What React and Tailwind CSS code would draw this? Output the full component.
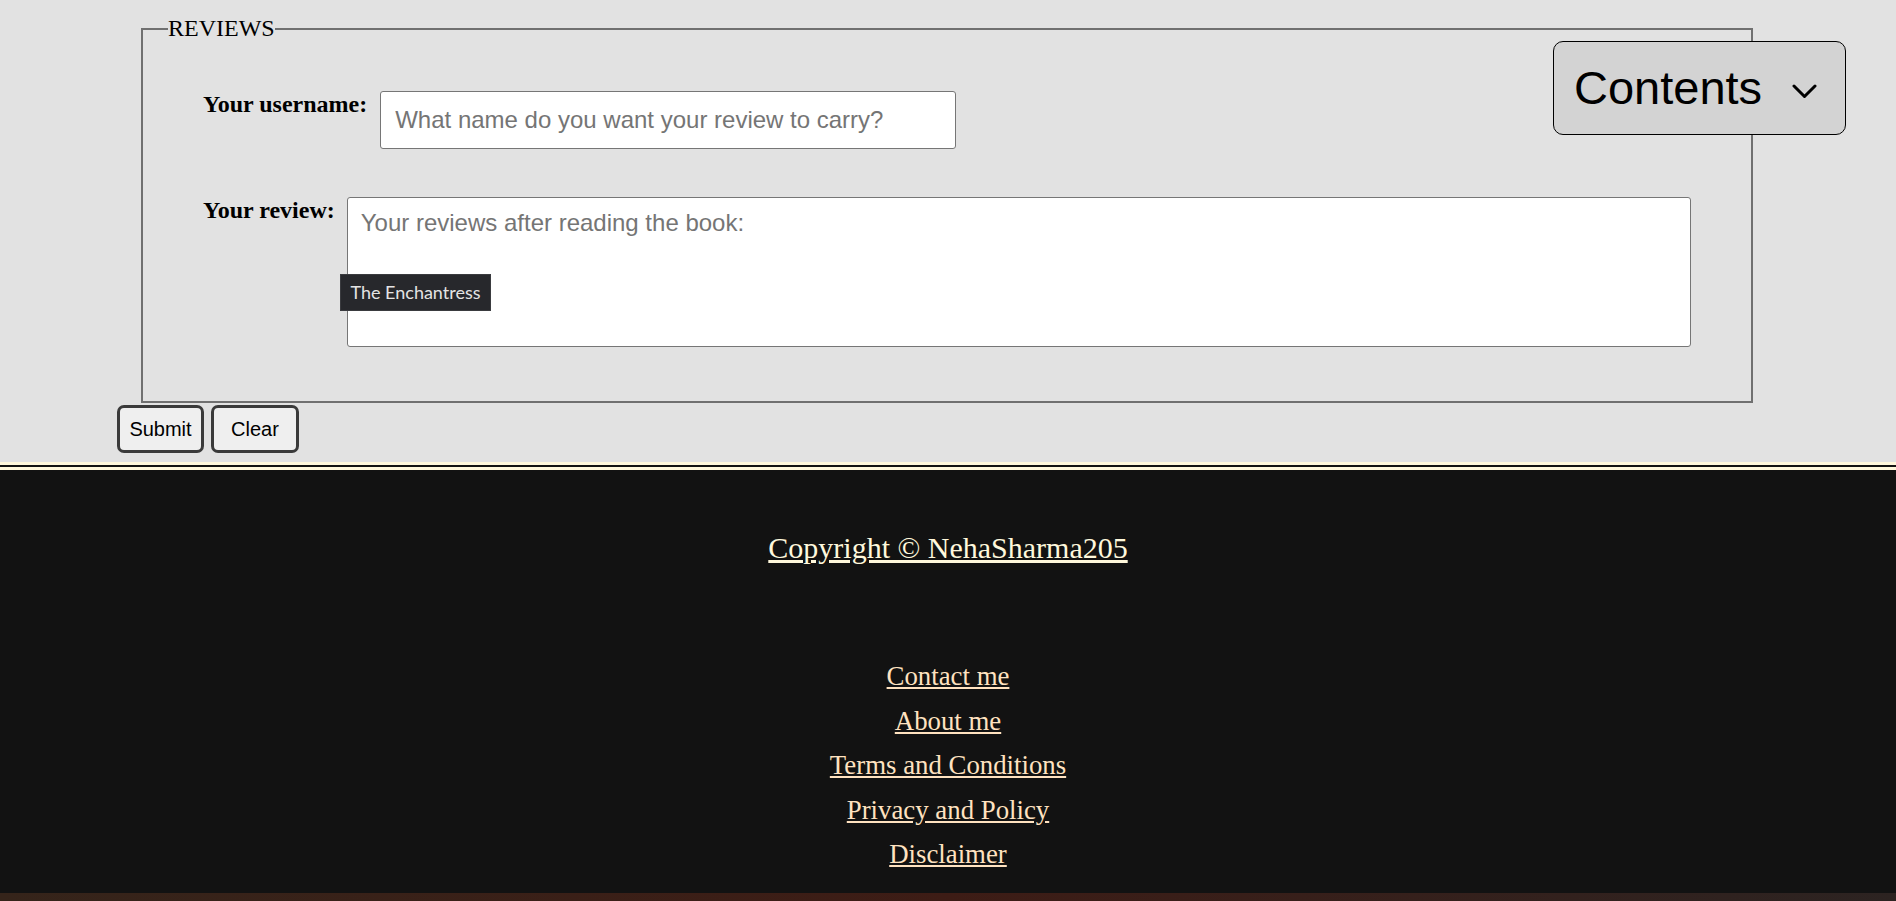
import React from 'react';

const footerLinks = ['Contact me', 'About me', 'Terms and Conditions', 'Privacy and Policy', 'Disclaimer'];

export default function App() {
  return (
    <div className="relative w-[1896px] h-[901px] overflow-hidden bg-[#e2e2e2]">
      {/* Review form */}
      <main className="pt-[15px] pl-[117px] h-[462px]">
        <fieldset className="ml-[24px] w-[1612px] border-2 border-[#707070] px-[25px] pb-[54px]">
          <legend className="p-0 text-[24px] leading-[27.6px] text-black font-['Liberation_Serif',serif]">REVIEWS</legend>

          <div className="mt-[47px] pl-[35px] flex items-start gap-[13px]">
            <label className="font-bold text-[24px] leading-[28px] text-black font-['Liberation_Serif',serif]">Your username:</label>
            <input
              type="text"
              placeholder="What name do you want your review to carry?"
              className="mt-[1px] w-[576px] h-[58px] bg-white border border-[#767676] rounded-[3px] px-[14px] text-[24px] font-['Liberation_Sans',Arial,sans-serif] placeholder:text-[#757575] outline-none"
            />
          </div>

          <div className="mt-[47px] pl-[35px] flex items-start gap-[12px]">
            <label className="font-bold text-[24px] leading-[28px] text-black font-['Liberation_Serif',serif]">Your review:</label>
            <textarea
              placeholder="Your reviews after reading the book:"
              className="mt-[1px] w-[1344px] h-[150px] bg-white border border-[#767676] rounded-[3px] pl-[13px] pt-[7px] text-[24px] font-['Liberation_Sans',Arial,sans-serif] placeholder:text-[#757575] resize-none outline-none"
            />
          </div>
        </fieldset>

        <div className="mt-[2px] flex gap-[7px]">
          <button className="w-[87px] h-[48px] bg-[#efefef] border-[3px] border-[#3a3a3a] rounded-[7px] text-[20px] text-black font-['Liberation_Sans',Arial,sans-serif]">Submit</button>
          <button className="w-[88px] h-[48px] bg-[#efefef] border-[3px] border-[#3a3a3a] rounded-[7px] text-[20px] text-black font-['Liberation_Sans',Arial,sans-serif]">Clear</button>
        </div>
      </main>

      {/* Footer */}
      <footer className="h-[431px] border-t-[8px] border-double border-[#fff8dc] bg-[#121212] pt-[58px] text-center font-['Liberation_Serif',serif]">
        <p className="text-[30px] leading-[40px]">
          <a href="#" className="underline text-[#fff8dc]">Copyright © NehaSharma205</a>
        </p>
        <ul className="mt-[86px] flex flex-col items-center">
          {footerLinks.map((l) => (
            <li key={l} className="text-[26.8px] leading-[44.5px]">
              <a href="#" className="underline text-[#ffe2c0]">{l}</a>
            </li>
          ))}
        </ul>
      </footer>
      <div className="h-[8px] bg-linear-to-r from-[#35241a] via-[#3d1c15] to-[#2c2321]" />

      {/* Contents dropdown */}
      <button className="absolute top-[41px] right-[50px] w-[293px] h-[94px] bg-[#d3d3d3] border border-black rounded-[10px] flex items-center pl-[20px] font-['Liberation_Sans',Arial,sans-serif] text-[47px] text-black">
        <span className="leading-none -mt-[1px]">Contents</span>
        <svg width="25" height="16" viewBox="0 0 25 16" className="ml-[30px] mt-[8px]" fill="none" stroke="black" strokeWidth="3" strokeLinecap="round" strokeLinejoin="round">
          <polyline points="2,2 12.5,12.5 23,2" />
        </svg>
      </button>

      {/* Tooltip */}
      <div className="absolute left-[340px] top-[274px] w-[151px] h-[37px] bg-[#27282c] border border-[#3a3b3f] flex items-center justify-center text-[18px] text-[#e4e4e4] font-['Lato',sans-serif]">
        The Enchantress
      </div>
    </div>
  );
}
